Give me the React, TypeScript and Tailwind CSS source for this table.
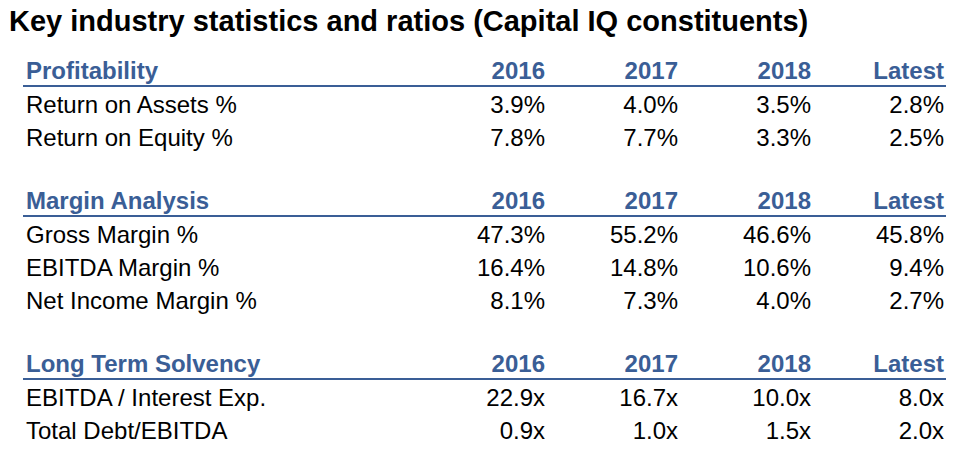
import React from 'react';

type Row = { label: string; values: string[] };
type Section = { title: string; rows: Row[] };

const sections: Section[] = [
  {
    title: 'Profitability',
    rows: [
      { label: 'Return on Assets %', values: ['3.9%', '4.0%', '3.5%', '2.8%'] },
      { label: 'Return on Equity %', values: ['7.8%', '7.7%', '3.3%', '2.5%'] },
    ],
  },
  {
    title: 'Margin Analysis',
    rows: [
      { label: 'Gross Margin %', values: ['47.3%', '55.2%', '46.6%', '45.8%'] },
      { label: 'EBITDA Margin %', values: ['16.4%', '14.8%', '10.6%', '9.4%'] },
      { label: 'Net Income Margin %', values: ['8.1%', '7.3%', '4.0%', '2.7%'] },
    ],
  },
  {
    title: 'Long Term Solvency',
    rows: [
      { label: 'EBITDA / Interest Exp.', values: ['22.9x', '16.7x', '10.0x', '8.0x'] },
      { label: 'Total Debt/EBITDA', values: ['0.9x', '1.0x', '1.5x', '2.0x'] },
    ],
  },
];

const years = ['2016', '2017', '2018', 'Latest'];

export default function App() {
  return (
    <div className="w-[960px] h-[457px] bg-white text-black font-['Liberation_Sans',Arial,sans-serif]">
      <h1 className="pl-[9px] pt-[5px] text-[29px] leading-[32px] font-bold">
        Key industry statistics and ratios (Capital IQ constituents)
      </h1>
      <div className="ml-[23px] w-[923px] mt-[17px] flex flex-col gap-[31px]">
        {sections.map((s) => (
          <div key={s.title}>
            <div className="grid grid-cols-[389px_repeat(4,133px)] pr-[2px] h-[33px] items-start border-b-2 border-[#3a5e96] text-[#3a5e96] font-bold text-[24px] leading-[33px]">
              <div className="pl-[3px]">{s.title}</div>
              {years.map((y) => (
                <div key={y} className="text-right">{y}</div>
              ))}
            </div>
            {s.rows.map((r) => (
              <div key={r.label} className="grid grid-cols-[389px_repeat(4,133px)] pr-[2px] h-[33px] pt-[1px] text-[24px] leading-[33px]">
                <div className="pl-[3px]">{r.label}</div>
                {r.values.map((v, i) => (
                  <div key={i} className="text-right">{v}</div>
                ))}
              </div>
            ))}
          </div>
        ))}
      </div>
    </div>
  );
}
